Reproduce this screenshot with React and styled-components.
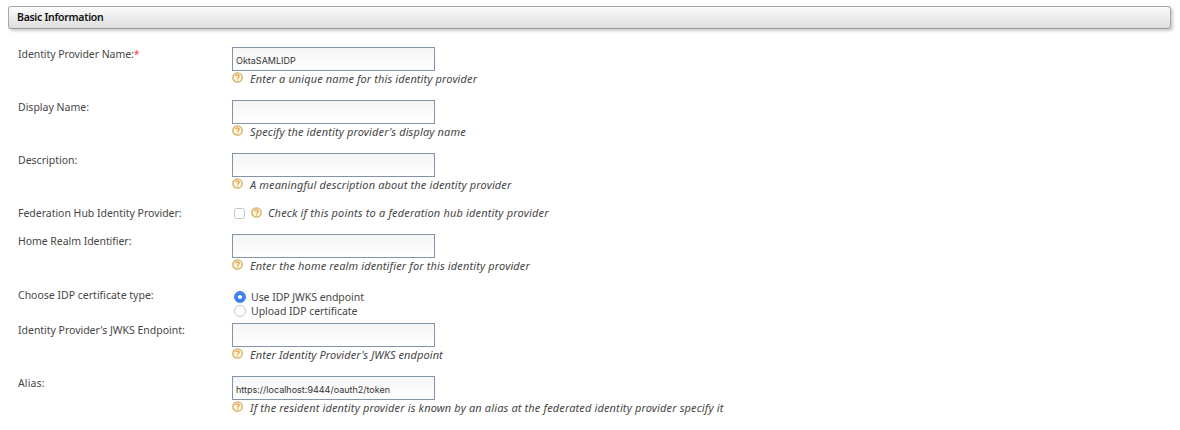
import React from "react";
import styled, { createGlobalStyle } from "styled-components";

const GlobalStyle = createGlobalStyle`
  * { box-sizing: border-box; }
  body {
    margin: 0;
    background: #fff;
    color: #464646;
    font: 10.5px/14px "Noto Sans", "Open Sans", sans-serif;
  }
`;

const Page = styled.main`
  width: 1180px;
  height: 430px;
  padding: 6px 9px 0 8px;
  overflow: hidden;
`;

const Heading = styled.h2`
  height: 23px;
  margin: 0;
  padding: 0 8px;
  border: 1px solid #a8a8a8;
  border-bottom-color: #999;
  border-radius: 3px;
  background: linear-gradient(#fbfbfb, #dedede);
  box-shadow: 2px 2px 3px rgba(0, 0, 0, 0.2);
  color: #111;
  font-size: 10.5px;
  font-weight: 600;
  line-height: 21px;
  letter-spacing: -0.29px;
`;

const Form = styled.form`
  padding: 18px 0 0 10px;
`;

const Row = styled.div`
  display: grid;
  grid-template-columns: 214px 1fr;
  height: ${(p) => p.$height}px;
`;

const Text = styled.span`
  white-space: nowrap;
  letter-spacing: ${(p) => p.$track || 0}px;
`;

const Label = styled.label`
  line-height: 14px;
`;

const Required = styled.span`
  color: #f44;
`;

const Field = styled.div`
  min-width: 0;
`;

const Input = styled.input`
  display: block;
  width: 203px;
  height: 24px;
  margin: 0;
  padding: 2px 3px 0;
  border: 1px solid #8492aa;
  border-radius: 0;
  outline: 0;
  background: linear-gradient(#f5f5f5, #fff);
  color: #333;
  font: 9px/18px Inter, "Liberation Sans", sans-serif;
`;

const Hint = styled.div`
  display: flex;
  gap: 7px;
  height: 14px;
  margin-top: 1px;
  font-size: 11px;
  font-style: italic;
  line-height: 13px;
`;

const CheckLine = styled.div`
  display: flex;
  gap: 6px;
  padding-left: 2px;

  ${Hint} {
    gap: 6px;
    line-height: 12px;
  }
`;

const Checkbox = styled.input`
  appearance: none;
  width: 11px;
  height: 11px;
  margin: 2px 0 0;
  border: 1px solid #c4c4c4;
  border-radius: 2.5px;
  background: #fff;
`;

const RadioLine = styled.label`
  display: flex;
  align-items: center;
  gap: 5px;
  height: 14.5px;
  padding-left: 2px;
`;

const RadioGroup = styled.div`
  padding-top: 1.5px;
`;

const Radio = styled.input`
  appearance: none;
  flex: none;
  width: 12px;
  height: 12px;
  margin: 0;
  border: 1px solid #c8c8c8;
  border-radius: 50%;
  background: #fff;
  &:checked {
    border-color: #3f7ff0;
    background: radial-gradient(circle, #fff 1.6px, #3f80f5 2.3px);
  }
`;

const Icon = styled.svg`
  flex: none;
  width: 11px;
  height: 11px;
`;

function HelpIcon() {
  return (
    <Icon viewBox="0 0 11 11" fill="none">
      <circle cx="5.5" cy="5.5" r="4.7" fill="#fff5d9" stroke="#d3ad66" strokeWidth="1.3" />
      <path d="M3.7 4.3C3.8 2.4 7.3 2.4 7.2 4.3C7.2 5.4 5.6 5.3 5.6 6.6M5.6 7.4V8.5" stroke="#e39a4a" strokeWidth="1.2" />
    </Icon>
  );
}

function Help({ text, track }) {
  return (
    <Hint>
      <HelpIcon />
      <Text $track={track}>{text}</Text>
    </Hint>
  );
}

function InputRow({ label, required, track, value, hint, hintTrack, height = 53 }) {
  return (
    <Row $height={height}>
      <Label>
        <Text $track={track}>{label}{required && <Required>*</Required>}</Text>
      </Label>
      <Field>
        <Input type="text" defaultValue={value} />
        <Help text={hint} track={hintTrack} />
      </Field>
    </Row>
  );
}

export default function App() {
  return (
    <Page>
      <GlobalStyle />
      <Heading>Basic Information</Heading>
      <Form>
        <InputRow label="Identity Provider Name:" track={-0.07} required value="OktaSAMLIDP" hint="Enter a unique name for this identity provider" hintTrack={0.11} />
        <InputRow label="Display Name:" hint="Specify the identity provider's display name" hintTrack={0.125} />
        <InputRow label="Description:" hint="A meaningful description about the identity provider" hintTrack={0.125} />
        <Row $height={28}>
          <Label><Text $track={-0.02}>Federation Hub Identity Provider:</Text></Label>
          <CheckLine>
            <Checkbox type="checkbox" />
            <Help text="Check if this points to a federation hub identity provider" track={0.165} />
          </CheckLine>
        </Row>
        <InputRow height={54} label="Home Realm Identifier:" track={-0.05} hint="Enter the home realm identifier for this identity provider" hintTrack={0.13} />
        <Row $height={35}>
          <Label><Text>Choose IDP certificate type:</Text></Label>
          <RadioGroup>
            <RadioLine><Radio type="radio" name="certificate" defaultChecked /><Text $track={-0.05}>Use IDP JWKS endpoint</Text></RadioLine>
            <RadioLine><Radio type="radio" name="certificate" /><Text $track={-0.04}>Upload IDP certificate</Text></RadioLine>
          </RadioGroup>
        </Row>
        <InputRow label="Identity Provider's JWKS Endpoint:" track={-0.02} hint="Enter Identity Provider's JWKS endpoint" hintTrack={0.08} />
        <InputRow label="Alias:" track={0.15} value="https://localhost:9444/oauth2/token" hint="If the resident identity provider is known by an alias at the federated identity provider specify it" hintTrack={0.137} />
      </Form>
    </Page>
  );
}
